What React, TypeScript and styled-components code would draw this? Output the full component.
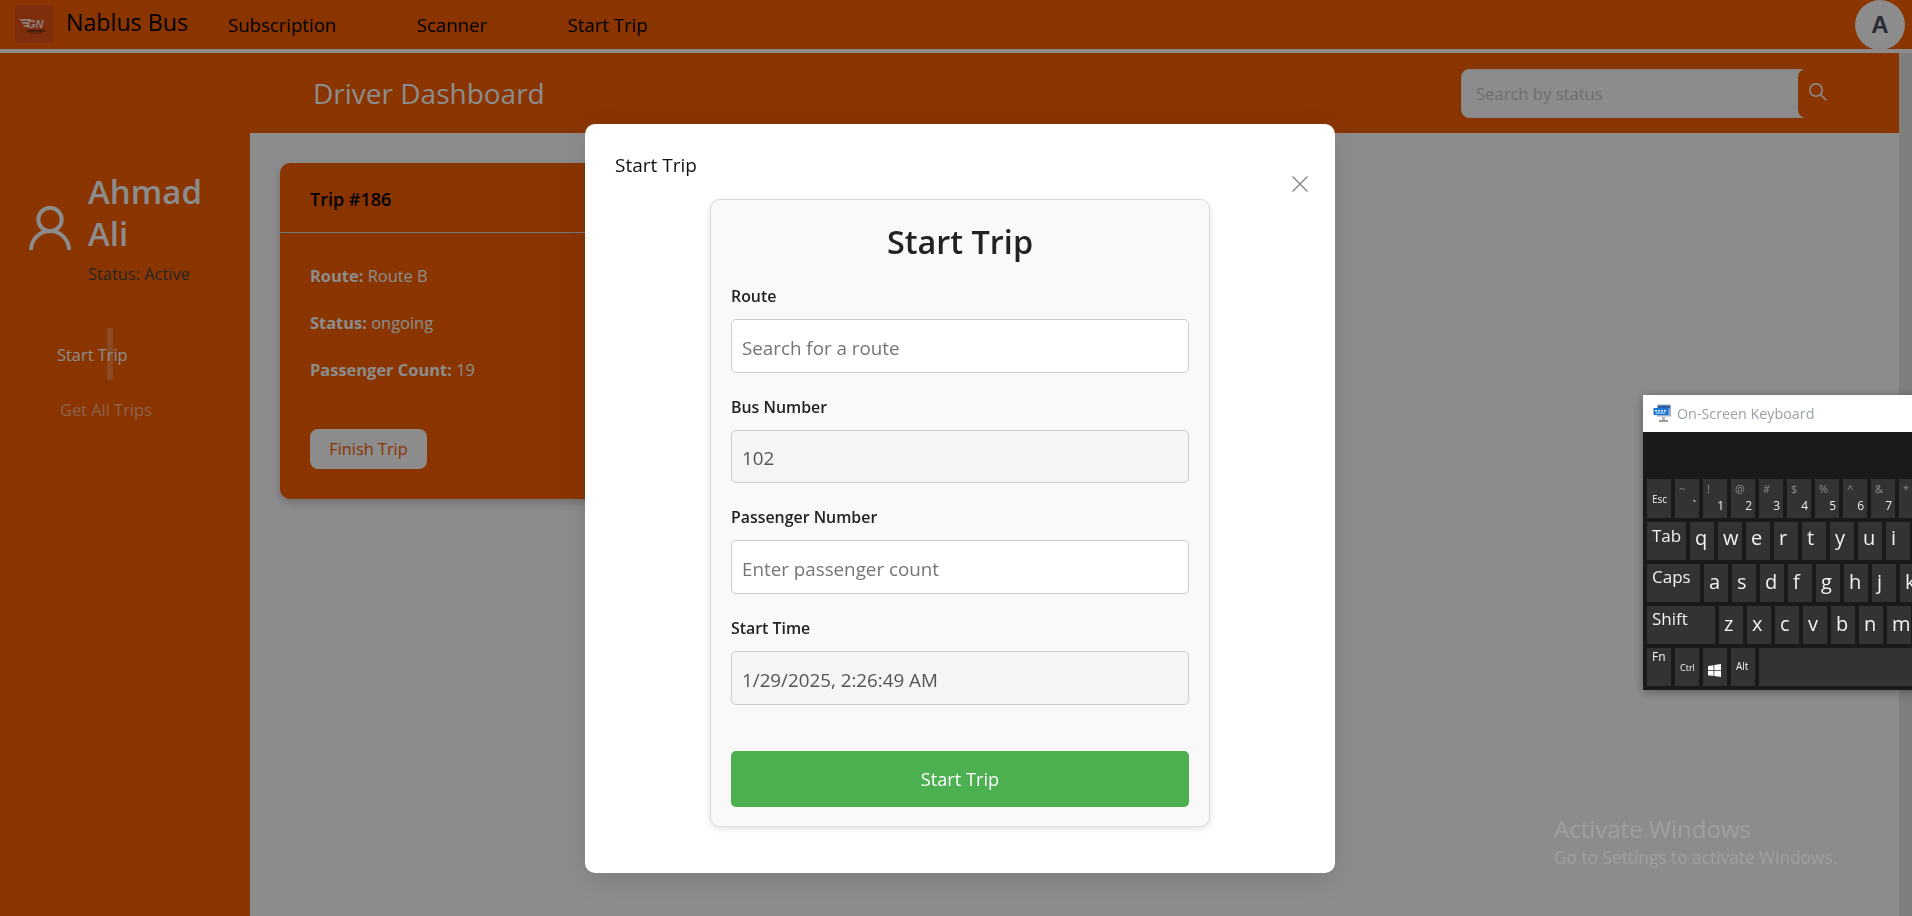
import React from "react";
import styled, { createGlobalStyle } from "styled-components";

const ORANGE = "#fc6000";
const FONT = `"Open Sans", "Noto Sans", sans-serif`;

const Global = createGlobalStyle`
  html, body { margin: 0; padding: 0; height: 100%; overflow: hidden; background: #fff; }
  body { font-family: ${FONT}; }
  * { box-sizing: border-box; }
  input::placeholder { color: #757575; opacity: 1; }
`;

const Page = styled.div`
  width: 1912px;
  height: 916px;
  display: flex;
  flex-direction: column;
  overflow: hidden;
`;

const Navbar = styled.nav`
  height: 53px;
  flex: none;
  display: flex;
  align-items: flex-start;
  background: ${ORANGE};
  border-bottom: 4px solid #fff;
  padding: 5px 7px 0 15px;
`;

const Logo = styled.svg`
  width: 38px;
  height: 38px;
  flex: none;
`;

const Brand = styled.span`
  margin: 0 40px 0 13px;
  font-size: 23.2px;
  line-height: 34px;
  color: #000;
`;

const NavLinks = styled.div`
  display: flex;
  gap: 80.5px;
  height: 38px;
  align-items: center;
`;

const NavLink = styled.a`
  font-size: 18.6px;
  color: #000;
`;

const Avatar = styled.div`
  margin: -5px 0 0 auto;
  width: 50px;
  height: 50px;
  border-radius: 50%;
  background: #fff;
  display: flex;
  align-items: center;
  justify-content: center;
  font: bold 24px "Liberation Sans", sans-serif;
  color: #4a5060;
`;

const Under = styled.div`
  flex: 1;
  display: flex;
  min-height: 0;
`;

const Gutter = styled.div`
  width: 13px;
  flex: none;
  background: #e6e6e6;
`;

const Dashboard = styled.div`
  flex: 1;
  display: grid;
  grid-template-columns: 250px 1fr;
  grid-template-rows: 80px 1fr;
  background: #fff;
`;

const Header = styled.header`
  grid-column: 1 / 3;
  background: ${ORANGE};
  display: flex;
  align-items: center;
  justify-content: space-between;
  padding: 0 61px 0 313px;
`;

const HeaderTitle = styled.h1`
  margin: 0;
  font-size: 28px;
  font-weight: 400;
  color: #fff;
`;

const Search = styled.div`
  display: flex;
  height: 49px;
`;

const SearchInput = styled.input`
  width: 344px;
  height: 49px;
  border: 1px solid #eee;
  border-radius: 8px 0 0 8px;
  background: #fff;
  padding: 0 14px;
  font: 16.6px ${FONT};
  &::placeholder { color: #cacaca; }
`;

const SearchButton = styled.button`
  width: 40px;
  margin-left: -7px;
  border: 0;
  border-radius: 8px;
  background: ${ORANGE};
  color: #fff;
  padding: 0 0 2px;
  display: flex;
  align-items: center;
  justify-content: center;
`;

const Sidebar = styled.aside`
  background: ${ORANGE};
  padding: 38px 0 0 29px;
`;

const Profile = styled.div`
  display: flex;
  align-items: center;
  gap: 17px;
`;

const ProfileText = styled.div`
  width: 130px;
`;

const Name = styled.h2`
  margin: 0;
  font-size: 33px;
  line-height: 42px;
  font-weight: 600;
  color: #fff;
`;

const StatusLine = styled.p`
  margin: 8px 0 0;
  font-size: 16.4px;
  line-height: 22px;
  color: #444;
`;

const SideNav = styled.div`
  margin: 43px 0 0 -29px;
  display: flex;
  flex-direction: column;
  gap: 3px;
`;

const SideItem = styled.a<{ $active?: boolean; $indent: number }>`
  position: relative;
  height: 52px;
  display: flex;
  align-items: center;
  padding-left: ${(p) => p.$indent}px;
  font-size: 16.4px;
  color: ${(p) => (p.$active ? "#fff" : "rgba(255,255,255,.55)")};
`;

const ActiveBar = styled.span`
  position: absolute;
  left: 107px;
  top: 0;
  width: 6px;
  height: 52px;
  background: rgba(255, 255, 255, 0.25);
`;

const Main = styled.main`
  padding: 30px;
  background: #fff;
`;

const TripCard = styled.section`
  width: 400px;
  height: 336px;
  background: ${ORANGE};
  border-radius: 10px;
  box-shadow: 0 4px 8px rgba(0, 0, 0, 0.2);
`;

const TripHead = styled.div`
  height: 70px;
  display: flex;
  align-items: center;
  padding: 2px 30px 0;
  border-bottom: 1px solid #cfe0ee;
  font-size: 18px;
  font-weight: 600;
  color: #000;
`;

const TripBody = styled.div`
  padding: 31px 30px;
`;

const TripRow = styled.p`
  margin: 0 0 23px;
  font-size: 16.45px;
  line-height: 24px;
  color: #fff;
  b { font-weight: 700; }
`;

const FinishButton = styled.button`
  margin-top: 23.5px;
  width: 117px;
  height: 40px;
  border: 0;
  border-radius: 8px;
  background: #fff;
  color: ${ORANGE};
  font: 16.3px ${FONT};
`;

const Overlay = styled.div`
  position: fixed;
  inset: 0;
  background: rgba(0, 0, 0, 0.45);
  padding: 124px 577px 0 585px;
`;

const Modal = styled.div`
  width: 750px;
  height: 749px;
  background: #fff;
  border-radius: 10px;
  box-shadow: 0 8px 32px rgba(0, 0, 0, 0.12);
  display: flex;
  flex-direction: column;
`;

const ModalHead = styled.div`
  height: 75px;
  flex: none;
  display: flex;
  justify-content: space-between;
  align-items: flex-start;
  padding: 29px 26px 0 30px;
`;

const ModalTitle = styled.div`
  font-size: 19px;
  line-height: 24px;
  font-weight: 500;
  color: #111;
`;

const CloseButton = styled.button`
  margin-top: 22px;
  width: 18px;
  height: 18px;
  padding: 0;
  border: 0;
  background: none;
  color: #808080;
`;

const ModalBody = styled.div`
  display: flex;
  justify-content: center;
`;

const FormCard = styled.form`
  width: 500px;
  height: 628px;
  padding: 20px;
  background: #f9f9f9;
  border: 1px solid #ddd;
  border-radius: 10px;
  box-shadow: 0 2px 6px rgba(0, 0, 0, 0.12);
`;

const FormTitle = styled.h2`
  margin: 0 0 21px;
  text-align: center;
  font-size: 32.4px;
  line-height: 43px;
  font-weight: 600;
  color: #222;
`;

const Field = styled.div`
  margin-bottom: 22.2px;
`;

const Label = styled.label`
  display: block;
  font-size: 15.9px;
  line-height: 24px;
  font-weight: 600;
  color: #222;
  margin-bottom: 11px;
`;

const TextInput = styled.input`
  display: block;
  width: 100%;
  height: 53.5px;
  padding: 4px 10px 0;
  border: 1px solid #ccc;
  border-radius: 5px;
  background: ${(p) => (p.readOnly ? "#f5f5f5" : "#fff")};
  color: #555;
  font: 18.8px ${FONT};
`;

const SubmitButton = styled.button`
  display: block;
  width: 100%;
  height: 56px;
  margin-top: 46px;
  border: 0;
  border-radius: 5px;
  background: #4caf50;
  color: #fff;
  font: 500 18.2px ${FONT};
`;

const OSK = styled.div`
  position: fixed;
  left: 1643px;
  top: 395px;
  width: 420px;
  height: 295px;
  background: #1a1a1a;
  box-shadow: 0 2px 10px rgba(0, 0, 0, 0.35);
`;

const OSKTitle = styled.div`
  height: 37px;
  background: #fff;
  display: flex;
  align-items: center;
  gap: 5px;
  padding: 0 0 1px 10px;
  font-size: 14.3px;
  color: #98a0a8;
`;

const OSKKeys = styled.div`
  padding: 47px 4px 0;
  display: flex;
  flex-direction: column;
  gap: 4px;
`;

const KeyRow = styled.div`
  display: flex;
  gap: 4px;
`;

const Key = styled.div<{ $w?: number; $h?: number; $size?: number; $top?: number }>`
  position: relative;
  flex: none;
  width: ${(p) => p.$w ?? 24}px;
  height: ${(p) => p.$h ?? 38}px;
  background: #333;
  color: #f2f2f2;
  font-size: ${(p) => p.$size ?? 20}px;
  line-height: 1;
  padding: ${(p) => p.$top ?? 6}px 0 0 5px;
  overflow: hidden;
`;

const KeyTop = styled.span`
  position: absolute;
  left: 4px;
  top: 4px;
  font-size: 11px;
  color: #8e8e8e;
`;

const KeyDigit = styled.span`
  position: absolute;
  right: 3px;
  bottom: 6px;
  font-size: 12px;
  color: #eee;
`;

const Watermark = styled.div`
  position: fixed;
  left: 1554px;
  top: 813px;
  color: rgba(255, 255, 255, 0.16);
  font-size: 17.3px;
  line-height: 22px;
  span { display: block; font-size: 24px; line-height: 32px; margin-bottom: 2px; }
`;

const GNLogo = () => (
  <Logo viewBox="0 0 38 38">
    <rect width="38" height="38" fill="#e55518" />
    <path d="M4 14h12l-1 2H6zM6 17h8l-1 2H8zM8 20h6l-1 2h-3z" fill="#fff" opacity=".8" />
    <text x="12" y="23" fontFamily="'Liberation Sans', sans-serif" fontWeight="700" fontSize="11" fontStyle="italic" fill="#fff" opacity=".85">GN</text>
    <rect x="12" y="25" width="18" height="1.5" fill="#111" opacity=".7" />
    <rect x="14" y="27.5" width="14" height="1" fill="#111" opacity=".45" />
  </Logo>
);

const SearchIcon = () => (
  <svg width="20" height="20" viewBox="0 0 20 20" fill="none" stroke="currentColor" strokeWidth="1.5" strokeLinecap="round">
    <circle cx="8" cy="8" r="6.2" />
    <path d="M12.6 12.6 18 18" />
  </svg>
);

const UserIcon = () => (
  <svg width="42" height="44" viewBox="0 0 42 44" fill="none" stroke="#fff" strokeWidth="4">
    <circle cx="21" cy="13.5" r="11.7" />
    <path d="M2 44A19 19 0 0 1 40 44" />
  </svg>
);

const CloseIcon = () => (
  <svg width="18" height="18" viewBox="0 0 18 18" stroke="currentColor" strokeWidth="1.3" fill="none">
    <path d="M1.5 1.5l15 15M16.5 1.5l-15 15" />
  </svg>
);

const OSKIcon = () => (
  <svg width="19" height="19" viewBox="0 0 19 19">
    <rect x="4" y="0.5" width="14" height="12" fill="#9fb2cc" />
    <rect x="5" y="1.5" width="12" height="3" fill="#2d5fa8" />
    <rect x="0.5" y="4" width="15" height="7" fill="#1f78d1" />
    <rect x="2" y="6" width="2" height="1.5" fill="#e8f4ff" />
    <rect x="5" y="6" width="2" height="1.5" fill="#e8f4ff" />
    <rect x="8" y="6" width="2" height="1.5" fill="#e8f4ff" />
    <rect x="11" y="6" width="2" height="1.5" fill="#e8f4ff" />
    <rect x="3" y="8.5" width="9" height="1" fill="#cfe6fa" />
    <rect x="9" y="13" width="3" height="3" fill="#b5b5b5" />
    <rect x="6" y="16" width="9" height="2" fill="#9a9a9a" />
  </svg>
);

const WinIcon = () => (
  <svg width="13" height="13" viewBox="0 0 13 13" fill="#fff">
    <path d="M0 2l5.5-.8v5H0zM6.3 1.1 13 0v6.2H6.3zM0 7h5.5v5L0 11.2zM6.3 7H13v6l-6.7-1z" />
  </svg>
);

const numbers: [string, string][] = [["~", "`"], ["!", "1"], ["@", "2"], ["#", "3"], ["$", "4"], ["%", "5"], ["^", "6"], ["&", "7"], ["*", "8"]];

export default function App() {
  return (
    <Page>
      <Global />
      <Navbar>
        <GNLogo />
        <Brand>Nablus Bus</Brand>
        <NavLinks>
          <NavLink>Subscription</NavLink>
          <NavLink>Scanner</NavLink>
          <NavLink>Start Trip</NavLink>
        </NavLinks>
        <Avatar>A</Avatar>
      </Navbar>
      <Under>
        <Dashboard>
          <Header>
            <HeaderTitle>Driver Dashboard</HeaderTitle>
            <Search>
              <SearchInput placeholder="Search by status" />
              <SearchButton><SearchIcon /></SearchButton>
            </Search>
          </Header>
          <Sidebar>
            <Profile>
              <UserIcon />
              <ProfileText>
                <Name>Ahmad Ali</Name>
                <StatusLine>Status: Active</StatusLine>
              </ProfileText>
            </Profile>
            <SideNav>
              <SideItem $active $indent={57}>Start Trip<ActiveBar /></SideItem>
              <SideItem $indent={60}>Get All Trips</SideItem>
            </SideNav>
          </Sidebar>
          <Main>
            <TripCard>
              <TripHead>Trip #186</TripHead>
              <TripBody>
                <TripRow><b>Route:</b> Route B</TripRow>
                <TripRow><b>Status:</b> ongoing</TripRow>
                <TripRow><b>Passenger Count:</b> 19</TripRow>
                <FinishButton>Finish Trip</FinishButton>
              </TripBody>
            </TripCard>
          </Main>
        </Dashboard>
        <Gutter />
      </Under>

      <Overlay>
        <Modal>
          <ModalHead>
            <ModalTitle>Start Trip</ModalTitle>
            <CloseButton><CloseIcon /></CloseButton>
          </ModalHead>
          <ModalBody>
            <FormCard>
              <FormTitle>Start Trip</FormTitle>
              <Field>
                <Label>Route</Label>
                <TextInput placeholder="Search for a route" />
              </Field>
              <Field>
                <Label>Bus Number</Label>
                <TextInput readOnly value="102" />
              </Field>
              <Field>
                <Label>Passenger Number</Label>
                <TextInput placeholder="Enter passenger count" />
              </Field>
              <Field>
                <Label>Start Time</Label>
                <TextInput readOnly value="1/29/2025, 2:26:49 AM" />
              </Field>
              <SubmitButton type="button">Start Trip</SubmitButton>
            </FormCard>
          </ModalBody>
        </Modal>
      </Overlay>

      <Watermark>
        <span>Activate Windows</span>
        Go to Settings to activate Windows.
      </Watermark>

      <OSK>
        <OSKTitle><OSKIcon />On-Screen Keyboard</OSKTitle>
        <OSKKeys>
          <KeyRow>
            <Key $size={10} $h={39} $top={15}>Esc</Key>
            {numbers.map(([a, b]) => (
              <Key key={b} $h={39}><KeyTop>{a}</KeyTop><KeyDigit>{b}</KeyDigit></Key>
            ))}
          </KeyRow>
          <KeyRow>
            <Key $w={39} $size={17} $top={5}>Tab</Key>
            {"qwertyui".split("").map((k) => <Key key={k}>{k}</Key>)}
          </KeyRow>
          <KeyRow>
            <Key $w={53} $size={17} $top={4}>Caps</Key>
            {"asdfghjk".split("").map((k) => <Key key={k} $top={8}>{k}</Key>)}
          </KeyRow>
          <KeyRow>
            <Key $w={68} $size={17} $top={4}>Shift</Key>
            {"zxcvbnm".split("").map((k) => <Key key={k} $top={8}>{k}</Key>)}
          </KeyRow>
          <KeyRow>
            <Key $size={12} $top={3}>Fn</Key>
            <Key $size={9} $top={15}>Ctrl</Key>
            <Key $top={12}><WinIcon /></Key>
            <Key $size={10} $top={13}>Alt</Key>
            <Key $w={200} />
          </KeyRow>
        </OSKKeys>
      </OSK>
    </Page>
  );
}
